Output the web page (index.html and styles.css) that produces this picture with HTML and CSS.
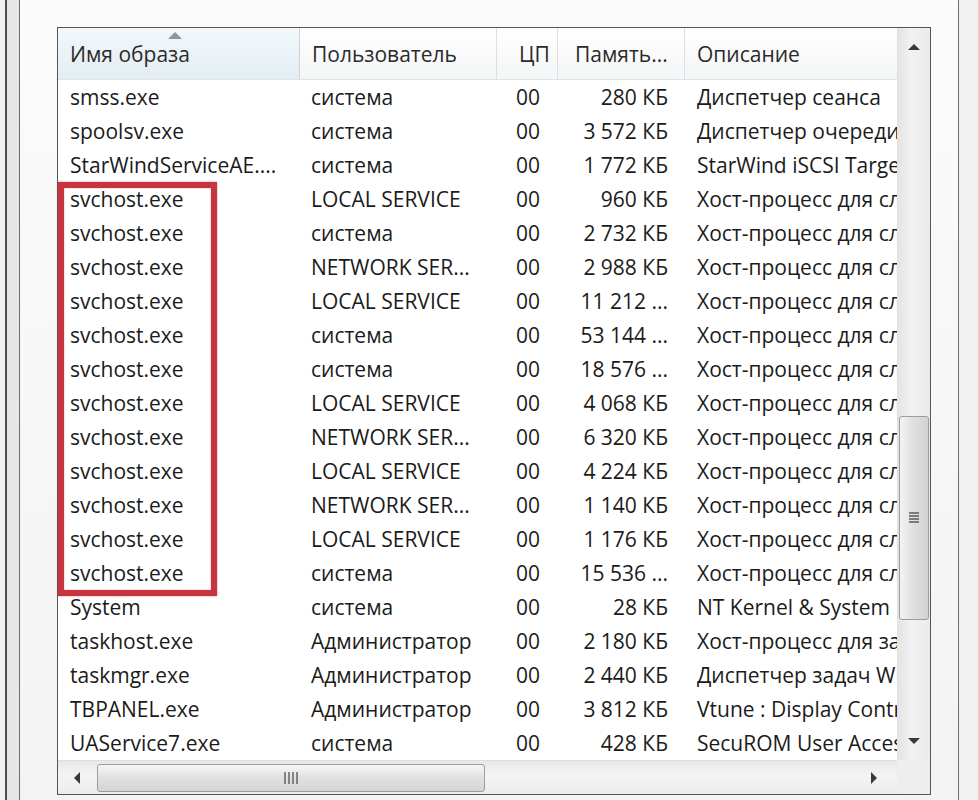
FILE: index.html
```html
<!DOCTYPE html>
<html lang="ru">
<head>
<meta charset="utf-8">
<title>Диспетчер задач</title>
<link rel="stylesheet" href="styles.css">
</head>
<body>
<div class="window">
  <div class="outer">
    <div class="pane">
      <div class="listbox">
        <div class="content">
          <div class="header row-grid">
            <div class="hcell sorted">Имя образа
              <svg class="sort-arrow" width="16" height="9" viewBox="0 0 16 9"><path d="M1 8 L8 1 L15 8 Z" fill="#8f979e"/></svg>
            </div>
            <div class="hcell">Пользователь</div>
            <div class="hcell cpu">ЦП</div>
            <div class="hcell mem">Память...</div>
            <div class="hcell desc">Описание</div>
          </div>
          <div class="rows">
            <div class="row row-grid"><div class="c name">smss.exe</div><div class="c user">система</div><div class="c cpu">00</div><div class="c mem">280 КБ</div><div class="c desc">Диспетчер сеанса</div></div>
            <div class="row row-grid"><div class="c name">spoolsv.exe</div><div class="c user">система</div><div class="c cpu">00</div><div class="c mem">3 572 КБ</div><div class="c desc">Диспетчер очереди печати</div></div>
            <div class="row row-grid"><div class="c name">StarWindServiceAE....</div><div class="c user">система</div><div class="c cpu">00</div><div class="c mem">1 772 КБ</div><div class="c desc">StarWind iSCSI Target Service</div></div>
            <div class="row row-grid"><div class="c name">svchost.exe</div><div class="c user">LOCAL SERVICE</div><div class="c cpu">00</div><div class="c mem">960 КБ</div><div class="c desc">Хост-процесс для служб Windows</div></div>
            <div class="row row-grid"><div class="c name">svchost.exe</div><div class="c user">система</div><div class="c cpu">00</div><div class="c mem">2 732 КБ</div><div class="c desc">Хост-процесс для служб Windows</div></div>
            <div class="row row-grid"><div class="c name">svchost.exe</div><div class="c user">NETWORK SER...</div><div class="c cpu">00</div><div class="c mem">2 988 КБ</div><div class="c desc">Хост-процесс для служб Windows</div></div>
            <div class="row row-grid"><div class="c name">svchost.exe</div><div class="c user">LOCAL SERVICE</div><div class="c cpu">00</div><div class="c mem">11 212 ...</div><div class="c desc">Хост-процесс для служб Windows</div></div>
            <div class="row row-grid"><div class="c name">svchost.exe</div><div class="c user">система</div><div class="c cpu">00</div><div class="c mem">53 144 ...</div><div class="c desc">Хост-процесс для служб Windows</div></div>
            <div class="row row-grid"><div class="c name">svchost.exe</div><div class="c user">система</div><div class="c cpu">00</div><div class="c mem">18 576 ...</div><div class="c desc">Хост-процесс для служб Windows</div></div>
            <div class="row row-grid"><div class="c name">svchost.exe</div><div class="c user">LOCAL SERVICE</div><div class="c cpu">00</div><div class="c mem">4 068 КБ</div><div class="c desc">Хост-процесс для служб Windows</div></div>
            <div class="row row-grid"><div class="c name">svchost.exe</div><div class="c user">NETWORK SER...</div><div class="c cpu">00</div><div class="c mem">6 320 КБ</div><div class="c desc">Хост-процесс для служб Windows</div></div>
            <div class="row row-grid"><div class="c name">svchost.exe</div><div class="c user">LOCAL SERVICE</div><div class="c cpu">00</div><div class="c mem">4 224 КБ</div><div class="c desc">Хост-процесс для служб Windows</div></div>
            <div class="row row-grid"><div class="c name">svchost.exe</div><div class="c user">NETWORK SER...</div><div class="c cpu">00</div><div class="c mem">1 140 КБ</div><div class="c desc">Хост-процесс для служб Windows</div></div>
            <div class="row row-grid"><div class="c name">svchost.exe</div><div class="c user">LOCAL SERVICE</div><div class="c cpu">00</div><div class="c mem">1 176 КБ</div><div class="c desc">Хост-процесс для служб Windows</div></div>
            <div class="row row-grid"><div class="c name">svchost.exe</div><div class="c user">система</div><div class="c cpu">00</div><div class="c mem">15 536 ...</div><div class="c desc">Хост-процесс для служб Windows</div></div>
            <div class="row row-grid"><div class="c name">System</div><div class="c user">система</div><div class="c cpu">00</div><div class="c mem">28 КБ</div><div class="c desc">NT Kernel &amp; System</div></div>
            <div class="row row-grid"><div class="c name">taskhost.exe</div><div class="c user">Администратор</div><div class="c cpu">00</div><div class="c mem">2 180 КБ</div><div class="c desc">Хост-процесс для задач Windows</div></div>
            <div class="row row-grid"><div class="c name">taskmgr.exe</div><div class="c user">Администратор</div><div class="c cpu">00</div><div class="c mem">2 440 КБ</div><div class="c desc">Диспетчер задач Windows</div></div>
            <div class="row row-grid"><div class="c name">TBPANEL.exe</div><div class="c user">Администратор</div><div class="c cpu">00</div><div class="c mem">3 812 КБ</div><div class="c desc">Vtune : Display Control Panel</div></div>
            <div class="row row-grid"><div class="c name">UAService7.exe</div><div class="c user">система</div><div class="c cpu">00</div><div class="c mem">428 КБ</div><div class="c desc">SecuROM User Access Service</div></div>
          </div>
        </div>
        <div class="vscroll">
          <svg class="arrow" width="16" height="10" viewBox="0 0 16 10"><path d="M2 8 L8 2 L14 8 Z" fill="#3a3a3a"/></svg>
          <div class="vtrack">
            <div class="vthumb">
              <svg width="12" height="14" viewBox="0 0 12 14"><path d="M1 2 H11 M1 5 H11 M1 8 H11 M1 11 H11" stroke="#5b5b5b" stroke-width="1.4"/></svg>
            </div>
          </div>
          <svg class="arrow" width="16" height="10" viewBox="0 0 16 10"><path d="M2 2 L8 8 L14 2 Z" fill="#3a3a3a"/></svg>
        </div>
        <div class="hscroll">
          <svg class="harrow" width="10" height="16" viewBox="0 0 10 16"><path d="M8 2 L2 8 L8 14 Z" fill="#3a3a3a"/></svg>
          <div class="htrack">
            <div class="hthumb">
              <svg width="16" height="14" viewBox="0 0 16 14"><path d="M2 1 V13 M6 1 V13 M10 1 V13 M14 1 V13" stroke="#5b5b5b" stroke-width="1.4"/></svg>
            </div>
          </div>
          <svg class="harrow" width="10" height="16" viewBox="0 0 10 16"><path d="M2 2 L8 8 L2 14 Z" fill="#3a3a3a"/></svg>
        </div>
        <div class="corner"></div>
        <div class="highlight"></div>
      </div>
    </div>
  </div>
</div>
</body>
</html>
```

FILE: styles.css
```css
* { box-sizing: border-box; }
html, body { margin: 0; padding: 0; }
body {
  width: 978px;
  height: 800px;
  overflow: hidden;
  background: #f1f1f1;
  font-family: "Open Sans", "Noto Sans", "DejaVu Sans", sans-serif;
  color: #1b1b1b;
}
.window {
  display: flex;
  height: 800px;
  padding-left: 5px;
}
.outer {
  width: 954px;
  height: 800px;
  border-left: 2px solid #4e4e4e;
  background: #e6e6e6;
  padding-left: 12px;
}
.pane {
  width: 940px;
  height: 800px;
  border-left: 1px solid #6d6d6d;
  border-right: 1px solid #6d6d6d;
  background: linear-gradient(#fbfbfb, #f3f3f3);
  padding: 27px 27px 0 37px;
}
.listbox {
  position: relative;
  width: 874px;
  height: 768px;
  border: 1px solid #555;
  background: #fff;
  display: grid;
  grid-template-columns: 839px 33px;
  grid-template-rows: 732px 34px;
}
.row-grid {
  display: grid;
  grid-template-columns: 242px 197px 61px 127px 212px;
}
.content { overflow: hidden; }
.header {
  height: 52px;
  background: linear-gradient(#ffffff, #f4f5f6);
  border-bottom: 1px solid #e1e3e6;
}
.hcell {
  position: relative;
  display: flex;
  align-items: center;
  font-size: 21px;
  color: #2a2a2a;
  border-right: 1px solid #dcdfe3;
  padding-left: 12px;
  white-space: nowrap;
  overflow: hidden;
}
.hcell.sorted {
  background: linear-gradient(#f2f8fb, #e3edf3);
  border-right-color: #c9d3db;
  overflow: visible;
}
.sort-arrow {
  position: absolute;
  left: 109px;
  top: 3px;
}
.hcell.cpu { padding-left: 22px; }
.hcell.mem { padding-left: 17px; }
.hcell.desc { padding-left: 12px; border-right: none; }
.row {
  height: 34px;
  align-items: center;
}
.c {
  font-size: 21px;
  line-height: 34px;
  white-space: nowrap;
  overflow: hidden;
}
.c.name { padding-left: 12px; }
.c.user { padding-left: 11px; }
.c.cpu { padding-left: 19px; }
.c.mem { text-align: right; padding-right: 17px; }
.c.desc { padding-left: 12px; }
.vscroll {
  display: flex;
  flex-direction: column;
  align-items: center;
  background: linear-gradient(90deg, #e4e4e4, #f2f2f2 40%, #ebebeb);
  border-left: 1px solid #e0e0e0;
  padding: 8px 0 8px;
}
.arrow { flex: none; margin: 6px 0; }
.vtrack {
  flex: 1;
  width: 100%;
  padding-top: 358px;
}
.vthumb {
  width: 30px;
  height: 204px;
  margin-left: 1px;
  border: 1px solid #9c9c9c;
  border-radius: 3px;
  background: linear-gradient(90deg, #f4f4f4, #e0e0e0 45%, #d2d2d2);
  display: flex;
  align-items: center;
  justify-content: center;
}
.hscroll {
  display: flex;
  align-items: center;
  background: linear-gradient(#e8e8e8, #f4f4f4 45%, #ececec);
  border-top: 1px solid #dedede;
  padding: 0 0 0 14px;
}
.harrow { flex: none; }
.htrack {
  flex: 1;
  height: 100%;
  display: flex;
  align-items: center;
  padding: 0 0 0 15px;
}
.hthumb {
  width: 388px;
  height: 28px;
  border: 1px solid #9c9c9c;
  border-radius: 3px;
  background: linear-gradient(#f6f6f6, #e2e2e2 45%, #d4d4d4);
  display: flex;
  align-items: center;
  justify-content: center;
}
.hscroll .harrow:last-child { margin-right: 18px; }
.corner {
  background: #eeeeee;
}
.highlight {
  position: absolute;
  left: 0;
  top: 154px;
  width: 159px;
  height: 414px;
  border: 6px solid #c5343f;
  box-shadow: 0 0 2px rgba(200, 60, 70, 0.6), inset 0 0 2px rgba(200, 60, 70, 0.5);
  pointer-events: none;
}
```
